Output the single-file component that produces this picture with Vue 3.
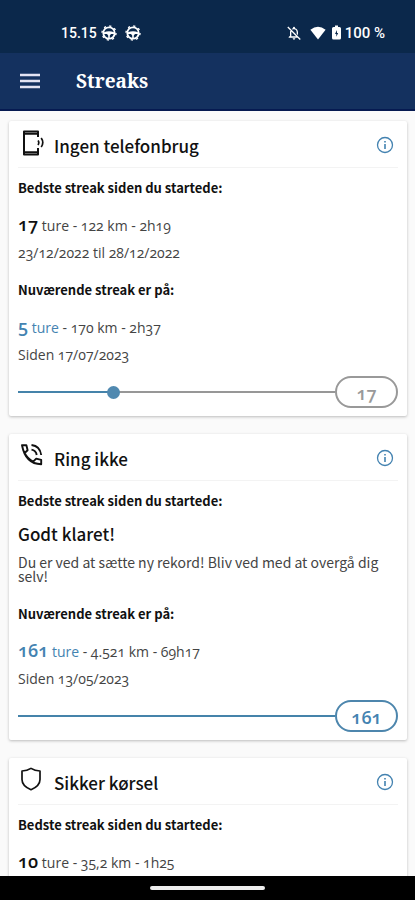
<script setup>
import { ref } from 'vue'

const cards = ref([
  {
    id: 'phone',
    title: 'Ingen telefonbrug',
    best: { trips: '17', detail: '122 km - 2h19', period: '23/12/2022 til 28/12/2022' },
    current: { trips: '5', detail: '170 km - 2h37', period: 'Siden 17/07/2023' },
    value: 5,
    max: 17
  },
  {
    id: 'call',
    title: 'Ring ikke',
    praise: {
      heading: 'Godt klaret!',
      text: 'Du er ved at sætte ny rekord! Bliv ved med at overgå dig selv!'
    },
    current: { trips: '161', detail: '4.521 km - 69h17', period: 'Siden 13/05/2023' },
    value: 161,
    max: 161
  },
  {
    id: 'shield',
    title: 'Sikker kørsel',
    best: { trips: '10', detail: '35,2 km - 1h25' }
  }
])
</script>

<template>
  <div class="screen">
    <div class="status">
      <div class="status-group">
        <span class="clock">15.15</span>
        <svg v-for="n in 2" :key="n" class="wheel" viewBox="0 0 16 16" aria-hidden="true">
          <circle cx="8" cy="8" r="5.7" fill="none" stroke="currentColor" stroke-width="1.8" />
          <circle cx="8" cy="8" r="7" fill="none" stroke="currentColor" stroke-width="1.4" stroke-dasharray="2.2 3.3" />
          <path d="M3 7.2Q8 5.4 13 7.2V9H10L8.8 10.4V14H7.2V10.4L6 9H3Z" fill="currentColor" />
        </svg>
      </div>
      <div class="status-group right">
        <svg class="bell" viewBox="0 0 24 24" aria-hidden="true">
          <path d="M12 22c1.1 0 2-.9 2-2h-4c0 1.1.9 2 2 2zm4-5H8v-6c0-.6.1-1.200.3-1.700L6.700 7.700C6.200 8.700 6 9.800 6 11v5l-2 2v1h14.200l-2-2zM12 6.500c2.500 0 4 2 4 4.500v2.200l2 2V11c0-3.100-1.600-5.600-4.500-6.300V4a1.500 1.500 0 0 0-3 0v.7c-.7.2-1.300.4-1.800.8l1.500 1.500c.5-.3 1.100-.5 1.800-.5zM3.400 2.200 2 3.600l18.700 18.800 1.400-1.400z" fill="currentColor" />
        </svg>
        <svg class="wifi" viewBox="0 0 16 14" aria-hidden="true">
          <path d="M8 13.500 0.400 3.700Q8-2.300 15.600 3.700Z" fill="currentColor" />
        </svg>
        <svg class="battery" viewBox="0 0 9 15" aria-hidden="true">
          <path d="M3 0.500h3v1.500h1.500Q9 2 9 3.500v9.500Q9 14.500 7.500 14.500h-6Q0 14.500 0 13V3.500Q0 2 1.500 2H3z" fill="currentColor" />
          <path d="M5 5 3 9h1.300v2.800L6.200 7.900H5z" fill="#0b284b" />
        </svg>
        <span>100 %</span>
      </div>
    </div>

    <header class="appbar">
      <button class="menu" type="button" aria-label="Menu">
        <svg viewBox="0 0 20 16" aria-hidden="true">
          <path d="M0 2h20M0 8h20M0 14h20" stroke="currentColor" stroke-width="2.500" />
        </svg>
      </button>
      <h1>Streaks</h1>
    </header>

    <main class="content">
      <section v-for="card in cards" :key="card.id" class="card">
        <div class="card-head">
          <svg v-if="card.id === 'phone'" class="glyph" viewBox="0 0 26 28" fill="none" stroke="currentColor" aria-hidden="true">
            <path d="M20 9V3.500H6V26.500H20V20" stroke-width="2" stroke-linejoin="round" />
            <path d="M6 5.800h14M6 24.200h14" stroke-width="2" />
            <path d="M20 12.500q1.600 2 0 4.500M23.200 10q3.200 4.500 0 9" stroke-width="1.700" />
          </svg>
          <svg v-else-if="card.id === 'call'" class="glyph" viewBox="0 0 26 28" fill="none" stroke="currentColor" aria-hidden="true">
            <path d="M4 4.200h4.400l1.200 5-3 2.800q3 6 8.600 8.600l3-3 5 1.200v4.400Q7.500 22.800 4 4.200Z" stroke-width="1.900" stroke-linejoin="round" />
            <path d="M13.500 8.600q4.500.8 5.200 5.400M13.500 4q8.600 1 9.700 10" stroke-width="1.900" />
          </svg>
          <svg v-else class="glyph" viewBox="0 0 26 28" fill="none" stroke="currentColor" aria-hidden="true">
            <path d="M13 3.400Q17 6 22 6v8.500q0 6.500-9 10.200-9-3.700-9-10.200V6q5 0 9-2.600Z" stroke-width="1.700" stroke-linejoin="round" />
          </svg>
          <h2>{{ card.title }}</h2>
          <button class="info" type="button" :aria-label="'Info om ' + card.title">
            <svg viewBox="0 0 18 18" aria-hidden="true">
              <circle cx="9" cy="9" r="7.500" fill="none" stroke="currentColor" stroke-width="1.300" />
              <path d="M9 8v5M9 5v1.600" stroke="currentColor" stroke-width="1.600" />
            </svg>
          </button>
        </div>

        <div class="card-body">
          <h3>Bedste streak siden du startede:</h3>
          <template v-if="card.best">
            <p class="line first"><b>{{ card.best.trips }}</b> ture - {{ card.best.detail }}</p>
            <p v-if="card.best.period" class="line">{{ card.best.period }}</p>
          </template>
          <div v-else class="praise">
            <h4>{{ card.praise.heading }}</h4>
            <p>{{ card.praise.text }}</p>
          </div>

          <template v-if="card.current">
            <h3 class="next">Nuværende streak er på:</h3>
            <p class="line first">
              <span class="accent"><b>{{ card.current.trips }}</b> ture</span> - {{ card.current.detail }}
            </p>
            <p class="line">{{ card.current.period }}</p>

            <div class="progress" :class="{ done: card.value === card.max }">
              <input
                type="range"
                min="0"
                :max="card.max"
                :value="card.value"
                :aria-label="card.title"
                :style="{ '--fill': (card.value / card.max) * 100 + '%' }"
              />
              <output>{{ card.max }}</output>
            </div>
          </template>
        </div>
      </section>
    </main>

    <div class="gesture"><span></span></div>
  </div>
</template>

<style>
body {
  background: #fafafa;
}
</style>

<style scoped>
.screen {
  display: flex;
  flex-direction: column;
  height: 100vh;
  overflow: hidden;
  background: #fafafa;
  color: #111;
  font-family: "Noto Sans CJK JP", "Open Sans", sans-serif;
}
h1, h2, h3, h4, p {
  margin: 0;
}
button {
  display: flex;
  padding: 0;
  border: 0;
  background: none;
}
.status {
  display: flex;
  flex: none;
  justify-content: space-between;
  align-items: center;
  box-sizing: border-box;
  height: 53px;
  padding: 12px 30px 0 61px;
  background: #0b284b;
  color: #fff;
  font: 500 15px/20px Roboto, sans-serif;
}
.status-group {
  display: flex;
  align-items: center;
  gap: 8px;
}
.status-group.right {
  gap: 4px;
}
.clock {
  margin-right: -4px;
  font-size: 14px;
}
.wheel {
  width: 16px;
  height: 16px;
}
.bell {
  width: 16px;
  height: 16px;
  margin-right: 4px;
}
.wifi {
  width: 16px;
  height: 14px;
  margin-right: 2px;
}
.battery {
  width: 9px;
  height: 15px;
}
.appbar {
  display: flex;
  flex: none;
  align-items: center;
  gap: 36px;
  box-sizing: border-box;
  height: 58px;
  padding: 0 20px;
  border-bottom: 2px solid #061a51;
  background: #14315f;
  color: #fff;
}
.menu {
  color: #e3e3f3;
}
.menu svg {
  width: 20px;
  height: 16px;
}
h1 {
  font: 700 19px/28px "Noto Serif", "Liberation Serif", serif;
}
.content {
  display: flex;
  flex: 1;
  flex-direction: column;
  gap: 18px;
  min-height: 0;
  padding: 10px 8px 0 9px;
  overflow-y: auto;
  scrollbar-width: none;
}
.card {
  flex: none;
  border-radius: 2px;
  background: #fff;
  box-shadow: 0 1px 3px rgba(0, 0, 0, 0.25);
}
.card-head {
  display: flex;
  align-items: center;
  box-sizing: border-box;
  height: 47px;
  margin: 0 9px;
  border-bottom: 1px solid #f3f3f3;
}
.glyph {
  width: 26px;
  height: 28px;
  margin-bottom: 4px;
}
h2 {
  flex: 1;
  padding: 4px 0 0 10px;
  font-size: 17px;
  font-weight: 500;
  line-height: 24px;
}
.info {
  margin: 2px 4px 0 0;
  color: #4382b0;
}
.info svg {
  width: 18px;
  height: 18px;
}
.card-body {
  padding: 9px 9px 8px;
}
h3 {
  font-size: 13px;
  font-weight: 700;
  line-height: 22px;
}
.next {
  margin-top: 13px;
}
.line {
  color: #444;
  font-family: "Open Sans", sans-serif;
  font-size: 14px;
  font-variant-numeric: oldstyle-nums;
  line-height: 27px;
}
.first {
  margin-top: 13px;
}
.line b {
  color: #111;
  font-size: 18px;
  font-weight: 600;
  line-height: 1;
}
.accent,
.accent b {
  color: #4483b1;
}
.praise {
  margin-top: 8px;
}
.praise + .next {
  margin-top: 20px;
}
h4 {
  font-size: 17px;
  font-weight: 500;
  line-height: 27px;
}
.praise p {
  margin-top: 8px;
  color: #444;
  font-size: 14px;
  line-height: 14px;
}
.progress {
  display: flex;
  align-items: center;
  margin-top: 8px;
}
.progress input {
  flex: 1;
  min-width: 0;
  height: 14px;
  margin: 0;
  appearance: none;
  background: linear-gradient(to right, #4583aa var(--fill), #979797 var(--fill)) center / 100% 2px no-repeat;
}
.progress input::-webkit-slider-thumb {
  width: 13px;
  height: 13px;
  border-radius: 50%;
  appearance: none;
  background: #5089b0;
}
.progress.done input::-webkit-slider-thumb {
  opacity: 0;
}
.progress output {
  box-sizing: border-box;
  width: 63px;
  height: 32px;
  border: 2px solid #999;
  border-radius: 16px;
  color: #999;
  font-family: "Open Sans", sans-serif;
  font-size: 18px;
  font-variant-numeric: oldstyle-nums;
  font-weight: 600;
  line-height: 30px;
  text-align: center;
}
.progress.done output {
  border-color: #4d86ad;
  color: #4483b1;
}
.gesture {
  display: flex;
  flex: none;
  justify-content: center;
  align-items: center;
  height: 24px;
  background: #000;
}
.gesture span {
  width: 115px;
  height: 4px;
  border-radius: 2px;
  background: #eee;
}
</style>
